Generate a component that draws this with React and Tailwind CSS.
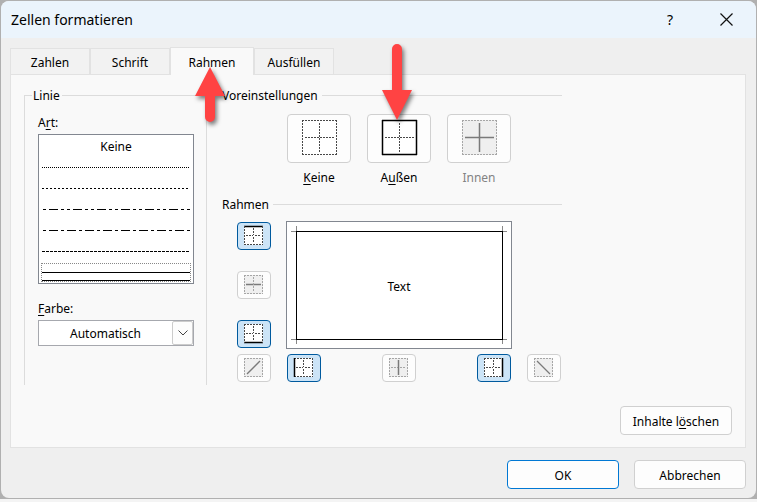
import { useState } from "react";

const TABS = ["Zahlen", "Schrift", "Rahmen", "Ausfüllen"];

const LINE_STYLES = [
  { id: "haar", label: "Haarlinie", dash: "1 1" },
  { id: "punkt", label: "Gepunktet", dash: "2 2" },
  { id: "strich-punkt-punkt", label: "Strich Punkt Punkt", dash: "3 3 9 3 3 3", offset: -1 },
  { id: "strich-punkt", label: "Strich Punkt", dash: "3 3 9 3", offset: -1 },
  { id: "strich", label: "Gestrichelt", dash: "3 1" },
  { id: "duenn", label: "Dünn", dash: undefined },
];

function Key({ children }) {
  return <span className="underline underline-offset-2">{children}</span>;
}

// Cell with dotted edges, used for the preset buttons and the small border buttons
function CellIcon({ size, solid = [], muted = false }) {
  const e = size - 0.5;
  const m = Math.floor(size / 2) + 0.5;
  const big = size > 20;
  const gap = big ? 3 : 2;
  const faint = muted ? "#a6a6a6" : "#484848";
  const strong = muted ? "#7a7a7a" : "#000000";
  const edges = {
    top: [0, 0.5, size, 0.5],
    bottom: [0, e, size, e],
    left: [0.5, 0, 0.5, size],
    right: [e, 0, e, size],
    horizontal: [gap, m, size - gap, m],
    vertical: [m, gap, m, size - gap],
  };
  const diagonals = {
    up: [gap + 1, size - gap - 1, size - gap - 1, gap + 1],
    down: [gap + 1, gap + 1, size - gap - 1, size - gap - 1],
  };
  const diagonal = solid.includes("up") || solid.includes("down");
  const inner = solid.includes("horizontal") || solid.includes("vertical");
  return (
    <svg
      width={size}
      height={size}
      viewBox={`0 0 ${size} ${size}`}
      aria-hidden="true"
      className="overflow-visible"
    >
      <rect width={size} height={size} fill={muted ? "#efefef" : "#ffffff"} />
      {Object.entries(edges).map(([name, [x1, y1, x2, y2]]) => {
        const on = solid.includes(name);
        if (diagonal && (name === "horizontal" || name === "vertical")) return null;
        return (
          <line
            key={name}
            x1={x1}
            y1={y1}
            x2={x2}
            y2={y2}
            stroke={on ? strong : faint}
            strokeWidth={on ? 1.5 : 1}
            strokeDasharray={on ? undefined : "2 1"}
          />
        );
      })}
      {!diagonal && !inner && <rect x={m - 0.5} y={m - 0.5} width="1" height="1" fill="#fff" />}
      {Object.entries(diagonals).map(([name, [x1, y1, x2, y2]]) =>
        solid.includes(name) ? (
          <line key={name} x1={x1} y1={y1} x2={x2} y2={y2} stroke={strong} strokeWidth="1.3" />
        ) : null
      )}
    </svg>
  );
}

function Preset({ id, label, solid, disabled, children }) {
  return (
    <div className="flex w-16 flex-col items-center">
      <button
        id={id}
        type="button"
        disabled={disabled}
        aria-label={label}
        className="flex h-[49px] w-full items-start justify-center rounded border border-[#d0d0d0] bg-[#fdfdfd] pt-[5px]"
      >
        <CellIcon size={35} solid={solid} muted={disabled} />
      </button>
      <label htmlFor={id} className={`mt-1.5 leading-[18px] ${disabled ? "text-[#838383]" : ""}`}>
        {children}
      </label>
    </div>
  );
}

function EdgeButton({ label, solid, active, disabled }) {
  return (
    <button
      type="button"
      aria-label={label}
      aria-pressed={active}
      disabled={disabled}
      className={`flex h-7 w-[34px] items-start rounded border pl-1.5 pt-[3px] ${
        active ? "border-[#005a9e] bg-[#cce4f7]" : "border-[#d0d0d0] bg-[#fdfdfd]"
      }`}
    >
      <CellIcon size={19} solid={solid} muted={disabled} />
    </button>
  );
}

export default function App() {
  const [tab, setTab] = useState("Rahmen");
  const [line, setLine] = useState("duenn");

  return (
    <div className="min-h-screen bg-[#f4f4f4] font-['Noto_Sans','Open_Sans',sans-serif] text-[12px] text-black">
      <div className="bg-[#b0b0b0] p-px">
        <div role="dialog" aria-labelledby="title" className="overflow-hidden rounded-lg bg-[#efefef]">
          <header className="flex h-[37px] items-center bg-[#ebf4fc] pl-2.5 pr-5">
            <h1 id="title" className="flex-1 text-[14px]">Zellen formatieren</h1>
            <button type="button" aria-label="Hilfe" className="w-5 text-[14px]">?</button>
            <button type="button" aria-label="Schließen" className="ml-9 flex w-5 justify-center">
              <svg width="13" height="13" viewBox="0 0 13 13" stroke="#111" strokeWidth="1.2">
                <path d="M.5 .5 12.5 12.5M12.5 .5 .5 12.5" />
              </svg>
            </button>
          </header>

          <div className="px-[9px] pt-[9px]">
            <div role="tablist" className="flex items-end">
              {TABS.map((name) => (
                <div key={name} className="relative">
                  <button
                    type="button"
                    role="tab"
                    aria-selected={tab === name}
                    onClick={() => setTab(name)}
                    className={
                      tab === name
                        ? "relative -mb-px block h-7 w-[84px] border border-b-0 border-[#e2e2e2] bg-[#f9f9f9] pt-0.5"
                        : "block h-[26px] w-20 border border-b-0 border-[#e2e2e2] bg-[#f2f2f2] pt-0.5"
                    }
                  >
                    {name}
                  </button>
                  {name === "Rahmen" && (
                    <svg
                      width="30"
                      height="55"
                      viewBox="0 0 30 55"
                      aria-hidden="true"
                      className="pointer-events-none absolute left-[25px] top-5 z-10 drop-shadow-[2px_3px_2px_rgba(0,0,0,0.5)]"
                    >
                      <path d="M15 0 30 29H20V50a5 5 0 0 1-10 0V29H0Z" fill="#ff4343" />
                    </svg>
                  )}
                </div>
              ))}
            </div>

            <main className="mr-px border border-[#e2e2e2] bg-[#f9f9f9] pb-3 pl-[13px] pr-[13px] pt-[11px]">
              <div className="flex items-start">
                <fieldset className="h-[299px] w-[183px] border border-b-0 border-[#dcdcdc] pl-[13px] pr-3">
                  <legend className="-ml-1.5 pl-px pr-0.5 pt-0.5 leading-4">Linie</legend>
                  <div id="art" className="mt-2.5 leading-[18px]">A<Key>r</Key>t:</div>
                  <div
                    role="radiogroup"
                    aria-labelledby="art"
                    className="mt-0.5 h-[150px] border border-[#828790] bg-white px-[3px] pt-0.5"
                  >
                    <label className="flex h-5 items-center justify-center">
                      <input
                        type="radio"
                        name="art"
                        checked={line === "keine"}
                        onChange={() => setLine("keine")}
                        className="sr-only"
                      />
                      Keine
                    </label>
                    {LINE_STYLES.map(({ id, label, dash, offset }) => (
                      <label
                        key={id}
                        className={`-mx-0.5 flex h-[21px] items-center px-0.5 ${line === id ? "outline-1 -outline-offset-2 outline-dotted outline-[#888]" : ""}`}
                      >
                        <input
                          type="radio"
                          name="art"
                          aria-label={label}
                          checked={line === id}
                          onChange={() => setLine(id)}
                          className="sr-only"
                        />
                        <svg width="100%" height="1" aria-hidden="true">
                          <line
                            x1="0"
                            y1=".5"
                            x2="100%"
                            y2=".5"
                            stroke="#000"
                            strokeDasharray={dash}
                            strokeDashoffset={offset}
                          />
                        </svg>
                      </label>
                    ))}
                    {/* upper edge of the next, cut-off entry */}
                    <div className="-mt-[3px] h-px bg-black" />
                  </div>
                  <label htmlFor="farbe" className="mt-4 block leading-[18px]">
                    <Key>F</Key>arbe:
                  </label>
                  <div className="relative mt-0.5">
                    <select
                      id="farbe"
                      className="h-[26px] w-full appearance-none border border-[#a6a8ae] bg-white pr-[21px] pt-0.5 text-center"
                    >
                      <option>Automatisch</option>
                    </select>
                    <span className="pointer-events-none absolute inset-y-px right-px flex w-[21px] items-center justify-center rounded-xs border border-[#cccccc] bg-[#fdfdfd]">
                      <svg width="10" height="6" viewBox="0 0 10 6" fill="none" stroke="#444">
                        <path d="M.5 .5 5 5 9.500 .5" />
                      </svg>
                    </span>
                  </div>
                </fieldset>

                <div className="ml-[15px] w-[340px]">
                  <fieldset className="border-t border-[#dcdcdc]">
                    <legend className="pr-1 pt-0.5 leading-4">Voreinstellungen</legend>
                    <div className="flex gap-4 pl-[65px] pt-2.5">
                      <Preset id="keine" label="Keine" solid={[]}><Key>K</Key>eine</Preset>
                      <div className="relative">
                        <Preset id="aussen" label="Außen" solid={["top", "bottom", "left", "right"]}>
                          A<Key>u</Key>ßen
                        </Preset>
                        <svg
                          width="30"
                          height="76"
                          viewBox="0 0 30 76"
                          aria-hidden="true"
                          className="pointer-events-none absolute -top-[70px] left-[15px] z-10 drop-shadow-[2px_3px_2px_rgba(0,0,0,0.5)]"
                        >
                          <path d="M10 5a5 5 0 0 1 10 0V46H30L15 76 0 46H10Z" fill="#ff4343" />
                        </svg>
                      </div>
                      <Preset id="innen" label="Innen" solid={["horizontal", "vertical"]} disabled>
                        Innen
                      </Preset>
                    </div>
                  </fieldset>

                  <fieldset className="mt-2 border-t border-[#dcdcdc]">
                    <legend className="pr-1 pt-0.5 leading-4">Rahmen</legend>
                    <div className="grid grid-cols-[34px_226px_34px] gap-x-[15px] gap-y-[5px] pl-[15px] pt-2">
                      <div className="flex flex-col justify-between py-px">
                        <EdgeButton label="Oben" solid={["top"]} active />
                        <EdgeButton label="Horizontal innen" solid={["horizontal"]} disabled />
                        <EdgeButton label="Unten" solid={["bottom"]} active />
                      </div>
                      <div className="relative flex h-32 items-center justify-center border border-[#828790] bg-white pt-1">
                        <svg viewBox="0 0 224 126" fill="none" aria-hidden="true" className="absolute inset-0 size-full">
                          <path
                            d="M4 9.500H9.500V4M215.500 4V9.500H220M4 117.500H9.500V122M215.500 122V117.500H220"
                            stroke="#888"
                          />
                          <rect x="9.500" y="9.500" width="206" height="108" stroke="#000" />
                        </svg>
                        <span className="relative">Text</span>
                      </div>
                      <div />
                      <EdgeButton label="Diagonal aufwärts" solid={["up"]} disabled />
                      <div className="flex justify-between px-px">
                        <EdgeButton label="Links" solid={["left"]} active />
                        <EdgeButton label="Vertikal innen" solid={["vertical"]} disabled />
                        <EdgeButton label="Rechts" solid={["right"]} active />
                      </div>
                      <EdgeButton label="Diagonal abwärts" solid={["down"]} disabled />
                    </div>
                  </fieldset>
                </div>
              </div>

              <div className="mt-[21px] flex justify-end">
                <button type="button" className="h-[29px] w-28 rounded border border-[#d0d0d0] bg-[#fdfdfd] pt-0.5">
                  Inhalte l<Key>ö</Key>schen
                </button>
              </div>
            </main>
          </div>

          <footer className="flex justify-end gap-[15px] pb-[9px] pr-2.5 pt-3">
            <button type="button" className="h-[29px] w-28 rounded border border-[#0078d4] bg-[#fdfdfd] pt-0.5">
              OK
            </button>
            <button type="button" className="h-[29px] w-28 rounded border border-[#d0d0d0] bg-[#fdfdfd] pt-0.5">
              Abbrechen
            </button>
          </footer>
        </div>
      </div>
    </div>
  );
}
